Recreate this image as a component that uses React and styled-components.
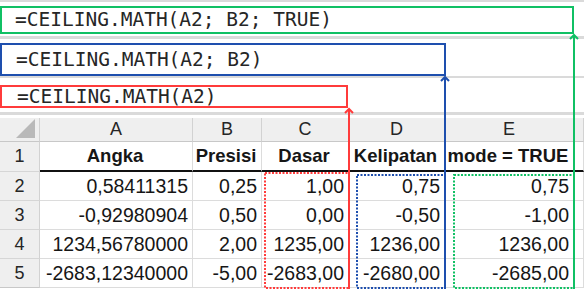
import { Fragment } from 'react'
import styled, { createGlobalStyle } from 'styled-components'

const GREEN = '#10c064'
const BLUE = '#1e4fae'
const RED = '#ff3b3b'

const GlobalStyle = createGlobalStyle`
  body {
    margin: 0;
    background: #fff;
  }
`

const Page = styled.div`
  position: relative;
  width: 584px;
  height: 297px;
  overflow: hidden;
  background: #fff;
`

const Strip = styled.div`
  border-top: ${(p) => p.$line}px solid #dadada;
  padding: ${(p) => p.$top}px 0 ${(p) => p.$bottom}px;
`

const FormulaBox = styled.div`
  box-sizing: border-box;
  width: ${(p) => p.$width}px;
  height: ${(p) => p.$height}px;
  border: 2px solid ${(p) => p.$color};
  display: flex;
  align-items: center;
  padding-left: ${(p) => p.$indent}px;
  font-family: 'DejaVu Sans Mono', 'Liberation Mono', monospace;
  font-size: 19.5px;
  line-height: 1;
  color: #262626;
  white-space: pre;
`

const Divider = styled.div`
  height: 3px;
  background: #dadada;
  margin-bottom: 3px;
`

const Sheet = styled.div`
  display: grid;
  grid-template-columns: 40px 153px 69px 87px 96px 129px 10px;
  grid-template-rows: 24px 30px 29px 29px 29px 29px;
  font-family: 'Liberation Sans', Arial, sans-serif;
  color: #161616;
`

const HeadBase = styled.div`
  box-sizing: border-box;
  background: #efefef;
  border-right: 1px solid #d2d2d2;
  border-bottom: 1px solid #c8c8c8;
  display: flex;
  align-items: center;
  justify-content: center;
  color: #262626;
`

const Corner = styled(HeadBase)`
  justify-content: flex-end;
  align-items: flex-end;
  padding: 0 4px 3px 0;

  svg {
    display: block;
  }
`

const ColHead = styled(HeadBase)`
  font-size: 18px;
`

const RowHead = styled(HeadBase)`
  font-size: 18px;
  border-bottom-color: ${(p) => (p.$last ? '#c8c8c8' : '#d6d6d6')};
`

const Cell = styled.div`
  box-sizing: border-box;
  display: flex;
  align-items: center;
  justify-content: ${(p) => (p.$bold ? 'center' : 'flex-end')};
  padding: 0 4px 0 2px;
  white-space: nowrap;
  font-size: ${(p) => (p.$bold ? '18.5px' : '19.5px')};
  font-weight: ${(p) => (p.$bold ? 700 : 400)};
  border-right: 1px solid #dcdcdc;
  border-bottom: ${(p) => (p.$bold ? '2px solid #111' : '1px solid #dcdcdc')};
`

const Overlay = styled.svg`
  position: absolute;
  top: 0;
  left: 0;
  pointer-events: none;
`

const columns = ['A', 'B', 'C', 'D', 'E', '']
const titles = ['Angka', 'Presisi', 'Dasar', 'Kelipatan', 'mode = TRUE', '']
const rows = [
  ['0,58411315', '0,25', '1,00', '0,75', '0,75'],
  ['-0,92980904', '0,50', '0,00', '-0,50', '-1,00'],
  ['1234,56780000', '2,00', '1235,00', '1236,00', '1236,00'],
  ['-2683,12340000', '-5,00', '-2683,00', '-2680,00', '-2685,00'],
]

const Arrow = ({ x, top, color }) => (
  <g stroke={color} strokeWidth="2" fill="none">
    <line x1={x} y1={top + 1} x2={x} y2={289} />
    <polyline points={`${x - 4},${top + 5} ${x},${top + 1} ${x + 4},${top + 5}`} />
  </g>
)

const Dotted = ({ x1, y1, x2, y2, color }) => (
  <rect
    x={x1}
    y={y1}
    width={x2 - x1}
    height={y2 - y1}
    fill="none"
    stroke={color}
    strokeWidth="2"
    strokeDasharray="2 1.5"
  />
)

const App = () => {
  return (
    <Page>
      <GlobalStyle />
      <Strip $line={2} $top={4} $bottom={2}>
        <FormulaBox $width={574} $height={28} $color={GREEN} $indent={13}>
          =CEILING.MATH(A2; B2; TRUE)
        </FormulaBox>
      </Strip>
      <Strip $line={3} $top={4} $bottom={0}>
        <FormulaBox $width={446} $height={33} $color={BLUE} $indent={14}>
          =CEILING.MATH(A2; B2)
        </FormulaBox>
      </Strip>
      <Strip $line={2} $top={7} $bottom={4}>
        <FormulaBox $width={348} $height={23} $color={RED} $indent={15}>
          =CEILING.MATH(A2)
        </FormulaBox>
      </Strip>
      <Divider />

      <Sheet>
        <Corner>
          <svg width="19" height="19" viewBox="0 0 19 19">
            <polygon points="19,0 19,19 0,19" fill="#b9b9b9" />
          </svg>
        </Corner>
        {columns.map((c, i) => (
          <ColHead key={i}>{c}</ColHead>
        ))}

        <RowHead>1</RowHead>
        {titles.map((t, i) => (
          <Cell key={i} $bold>
            {t}
          </Cell>
        ))}

        {rows.map((r, ri) => (
          <Fragment key={ri}>
            <RowHead $last={ri === rows.length - 1}>{ri + 2}</RowHead>
            {r.map((v, ci) => (
              <Cell key={ci}>{v}</Cell>
            ))}
            <Cell />
          </Fragment>
        ))}
      </Sheet>

      <Overlay width="584" height="297" viewBox="0 0 584 297">
        <Dotted x1={265} y1={173} x2={349} y2={288} color={RED} />
        <Dotted x1={357} y1={175} x2={445} y2={288} color={BLUE} />
        <Dotted x1={454} y1={175} x2={574} y2={288} color={GREEN} />
        <Arrow x={349} top={108} color={RED} />
        <Arrow x={445} top={76} color={BLUE} />
        <Arrow x={574} top={34} color={GREEN} />
      </Overlay>
    </Page>
  )
}

export default App
